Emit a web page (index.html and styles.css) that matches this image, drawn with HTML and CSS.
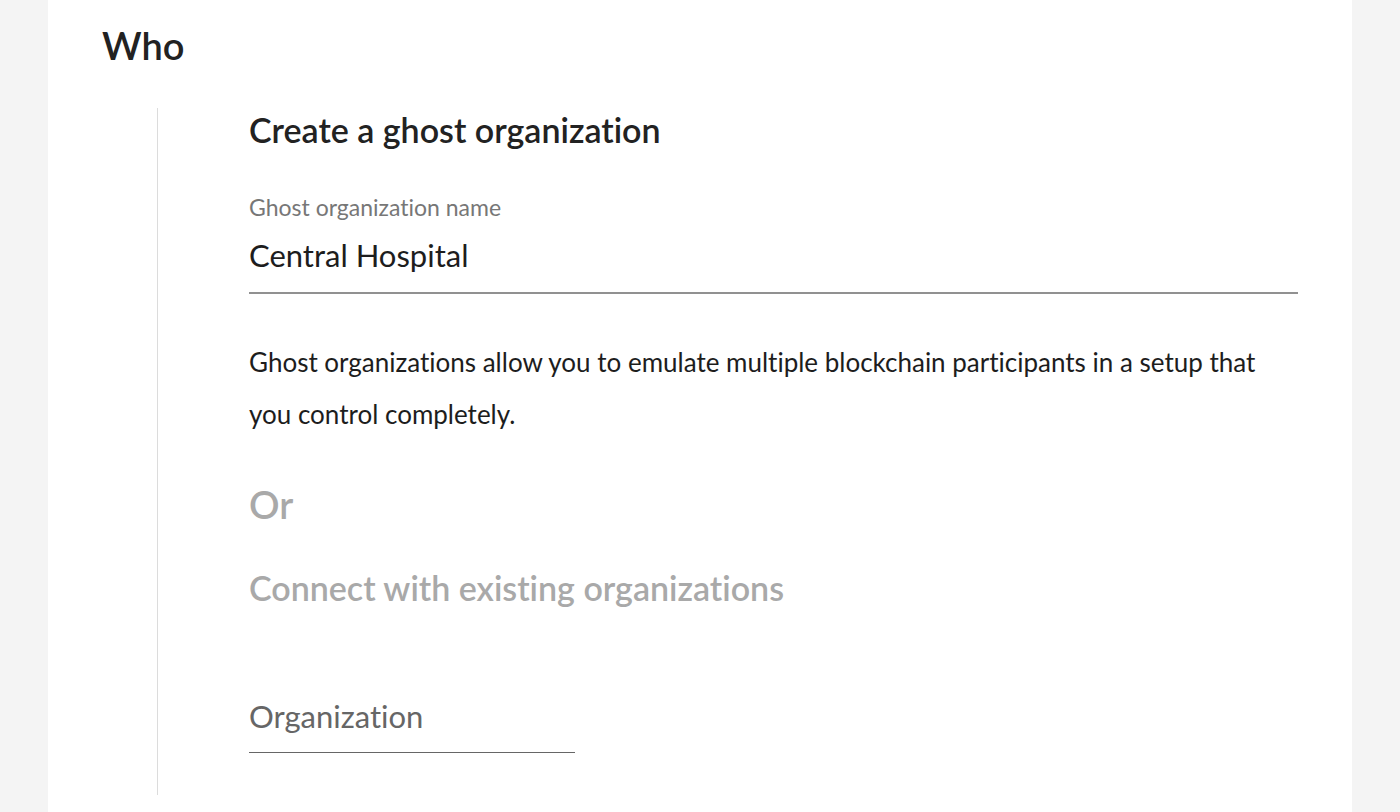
FILE: index.html
```html
<!DOCTYPE html>
<html>
<head>
<meta charset="utf-8">
<link rel="stylesheet" href="styles.css">
</head>
<body>
<div class="panel">
  <h1 class="title">Who</h1>
  <section class="step">
    <h2 class="heading">Create a ghost organization</h2>
    <div class="field">
      <label class="field-label">Ghost organization name</label>
      <div class="field-value">Central Hospital</div>
    </div>
    <p class="desc">Ghost organizations allow you to emulate multiple blockchain participants in a setup that you control completely.</p>
    <div class="or">Or</div>
    <h2 class="heading muted">Connect with existing organizations</h2>
    <div class="select">
      <div class="select-placeholder">Organization</div>
    </div>
  </section>
</div>
</body>
</html>
```
FILE: styles.css
```css
html, body {
  margin: 0;
  padding: 0;
}
body {
  background: #f4f4f4;
  font-family: Lato, "Noto Sans", sans-serif;
  font-variant-ligatures: none;
  color: #1f1f1f;
}
.panel {
  margin: 0 48px;
  background: #fff;
  min-height: 812px;
  padding: 0 54px;
  box-sizing: border-box;
  overflow: hidden;
}
.title {
  margin: 21px 0 0;
  font-size: 38px;
  font-weight: 600;
  line-height: 48px;
  color: #222;
}
.step {
  margin: 39px 0 0 55px;
  border-left: 1px solid #dcdcdc;
  padding: 2px 0 0 91px;
  height: 687px;
  box-sizing: border-box;
}
.heading {
  margin: 0;
  font-size: 34px;
  font-weight: 600;
  line-height: 40px;
  color: #222;
}
.heading.muted {
  color: #a9a9a9;
  margin-top: 40px;
}
.field {
  margin-top: 43px;
  border-bottom: 2px solid #919191;
  padding-bottom: 19px;
}
.field-label {
  display: block;
  font-size: 23px;
  line-height: 28px;
  color: #777;
}
.field-value {
  margin-top: 16px;
  font-size: 31px;
  line-height: 36px;
  color: #1d1d1d;
}
.desc {
  margin: 42px 0 0;
  max-width: 1030px;
  font-size: 26px;
  line-height: 52px;
  color: #1d1d1d;
}
.or {
  margin-top: 40px;
  font-size: 38px;
  font-weight: 600;
  line-height: 48px;
  color: #a9a9a9;
}
.select {
  width: 326px;
  margin-top: 90px;
  border-bottom: 1px solid #666;
  padding-bottom: 18px;
}
.select-placeholder {
  font-size: 31px;
  line-height: 36px;
  color: #666;
}
```
